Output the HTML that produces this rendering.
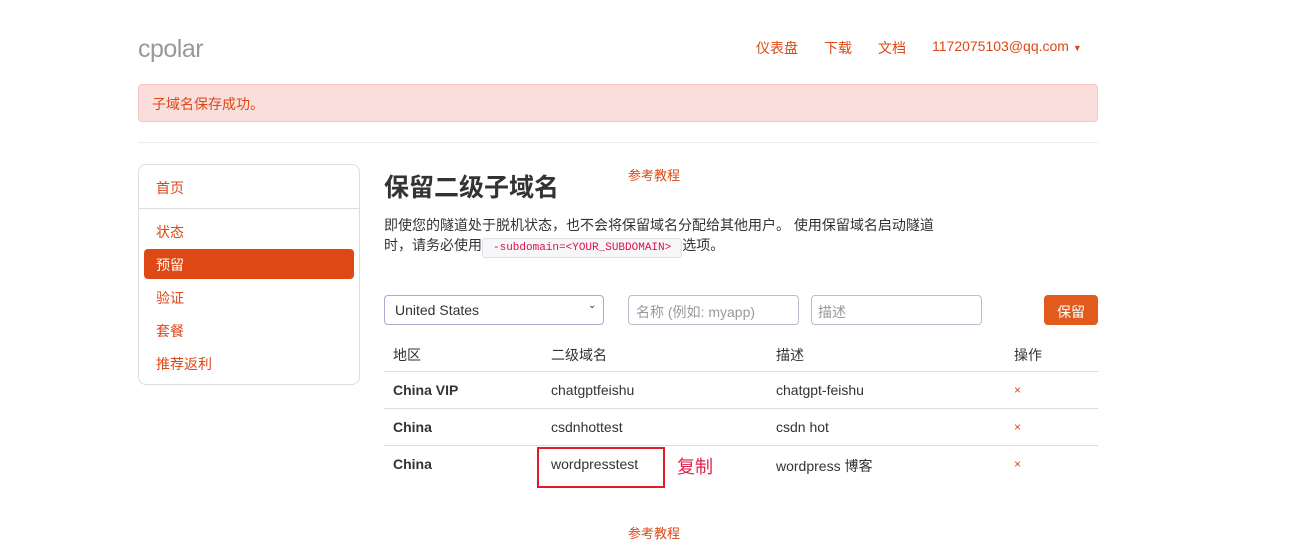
<!DOCTYPE html>
<html><head><meta charset="utf-8"><style>
body{margin:0;width:1310px;height:533px;overflow:hidden;background:#fff;font-family:"Liberation Sans","Noto Sans CJK SC",sans-serif;font-size:14px;color:#333;position:relative}
.a{position:absolute;white-space:nowrap}
.r{color:#dd4814}
</style></head><body>
<div class="a" style="left:138px;top:35px;font-size:25px;color:#999;letter-spacing:-0.5px">cpolar</div>
<div class="a r" style="left:756px;top:38px">仪表盘</div>
<div class="a r" style="left:824px;top:38px">下载</div>
<div class="a r" style="left:878px;top:38px">文档</div>
<div class="a r" style="left:932px;top:38px">1172075103@qq.com <span style="font-size:9px">▼</span></div>
<div class="a" style="left:138px;top:84px;width:958px;height:36px;background:#f9dedc;border:1px solid #f4c6c6;border-radius:4px"></div>
<div class="a r" style="left:152px;top:94px">子域名保存成功。</div>
<div class="a" style="left:138px;top:142px;width:960px;height:1px;background:#eee"></div>
<div class="a" style="left:138px;top:164px;width:220px;height:219px;border:1px solid #ddd;border-radius:8px"></div>
<div class="a" style="left:139px;top:208px;width:220px;height:1px;background:#ddd"></div>
<div class="a r" style="left:156px;top:178px">首页</div>
<div class="a r" style="left:156px;top:222px">状态</div>
<div class="a" style="left:144px;top:249px;width:210px;height:30px;background:#dd4814;border-radius:4px"></div>
<div class="a" style="left:156px;top:255px;color:#fff">预留</div>
<div class="a r" style="left:156px;top:288px">验证</div>
<div class="a r" style="left:156px;top:321px">套餐</div>
<div class="a r" style="left:156px;top:354px">推荐返利</div>
<div class="a" style="left:384px;top:168px;font-size:25px;font-weight:bold">保留二级子域名</div>
<div class="a r" style="left:628px;top:165px;font-size:13px">参考教程</div>
<div class="a" style="left:384px;top:215px;font-size:14px">即使您的隧道处于脱机状态，也不会将保留域名分配给其他用户。 使用保留域名启动隧道</div>
<div class="a" style="left:384px;top:235px;font-size:14px">时，请务必使用<span style="font-family:'Liberation Mono',monospace;font-size:11px;color:#d14;background:#f7f7f9;border:1px solid #e1e1e8;border-radius:3px;padding:3px 10px">-subdomain=&lt;YOUR_SUBDOMAIN&gt;</span>选项。</div>
<div class="a" style="left:384px;top:295px;width:218px;height:28px;border:1px solid #aac;border-radius:4px"></div>
<div class="a" style="left:395px;top:302px">United States</div>
<div class="a" style="left:588px;top:300px;font-size:10px">⌄</div>
<div class="a" style="left:628px;top:295px;width:169px;height:28px;border:1px solid #bbc;border-radius:4px"></div>
<div class="a" style="left:636px;top:302px;color:#999">名称 (例如: myapp)</div>
<div class="a" style="left:811px;top:295px;width:169px;height:28px;border:1px solid #bbc;border-radius:4px"></div>
<div class="a" style="left:818px;top:302px;color:#999">描述</div>
<div class="a" style="left:1044px;top:295px;width:54px;height:30px;background:#e25a1c;border-radius:4px"></div>
<div class="a" style="left:1057px;top:302px;color:#fff">保留</div>
<div class="a" style="left:393px;top:345px">地区</div>
<div class="a" style="left:551px;top:345px">二级域名</div>
<div class="a" style="left:776px;top:345px">描述</div>
<div class="a" style="left:1014px;top:345px">操作</div>
<div class="a" style="left:384px;top:371px;width:714px;height:1px;background:#ddd"></div>
<div class="a" style="left:384px;top:408px;width:714px;height:1px;background:#ddd"></div>
<div class="a" style="left:384px;top:445px;width:714px;height:1px;background:#ddd"></div>
<div class="a" style="left:393px;top:382px;font-weight:bold">China VIP</div>
<div class="a" style="left:551px;top:382px">chatgptfeishu</div>
<div class="a" style="left:776px;top:382px">chatgpt-feishu</div>
<div class="a r" style="left:1014px;top:383px;font-size:12px">×</div>
<div class="a" style="left:393px;top:419px;font-weight:bold">China</div>
<div class="a" style="left:551px;top:419px">csdnhottest</div>
<div class="a" style="left:776px;top:419px">csdn hot</div>
<div class="a r" style="left:1014px;top:420px;font-size:12px">×</div>
<div class="a" style="left:393px;top:456px;font-weight:bold">China</div>
<div class="a" style="left:551px;top:456px">wordpresstest</div>
<div class="a" style="left:537px;top:447px;width:124px;height:37px;border:2px solid #e01b2b"></div>
<div class="a" style="left:677px;top:453px;font-size:18px;color:#e0224a">复制</div>
<div class="a" style="left:776px;top:456px">wordpress 博客</div>
<div class="a r" style="left:1014px;top:457px;font-size:12px">×</div>
<div class="a r" style="left:628px;top:523px;font-size:13px">参考教程</div>
</body></html>
